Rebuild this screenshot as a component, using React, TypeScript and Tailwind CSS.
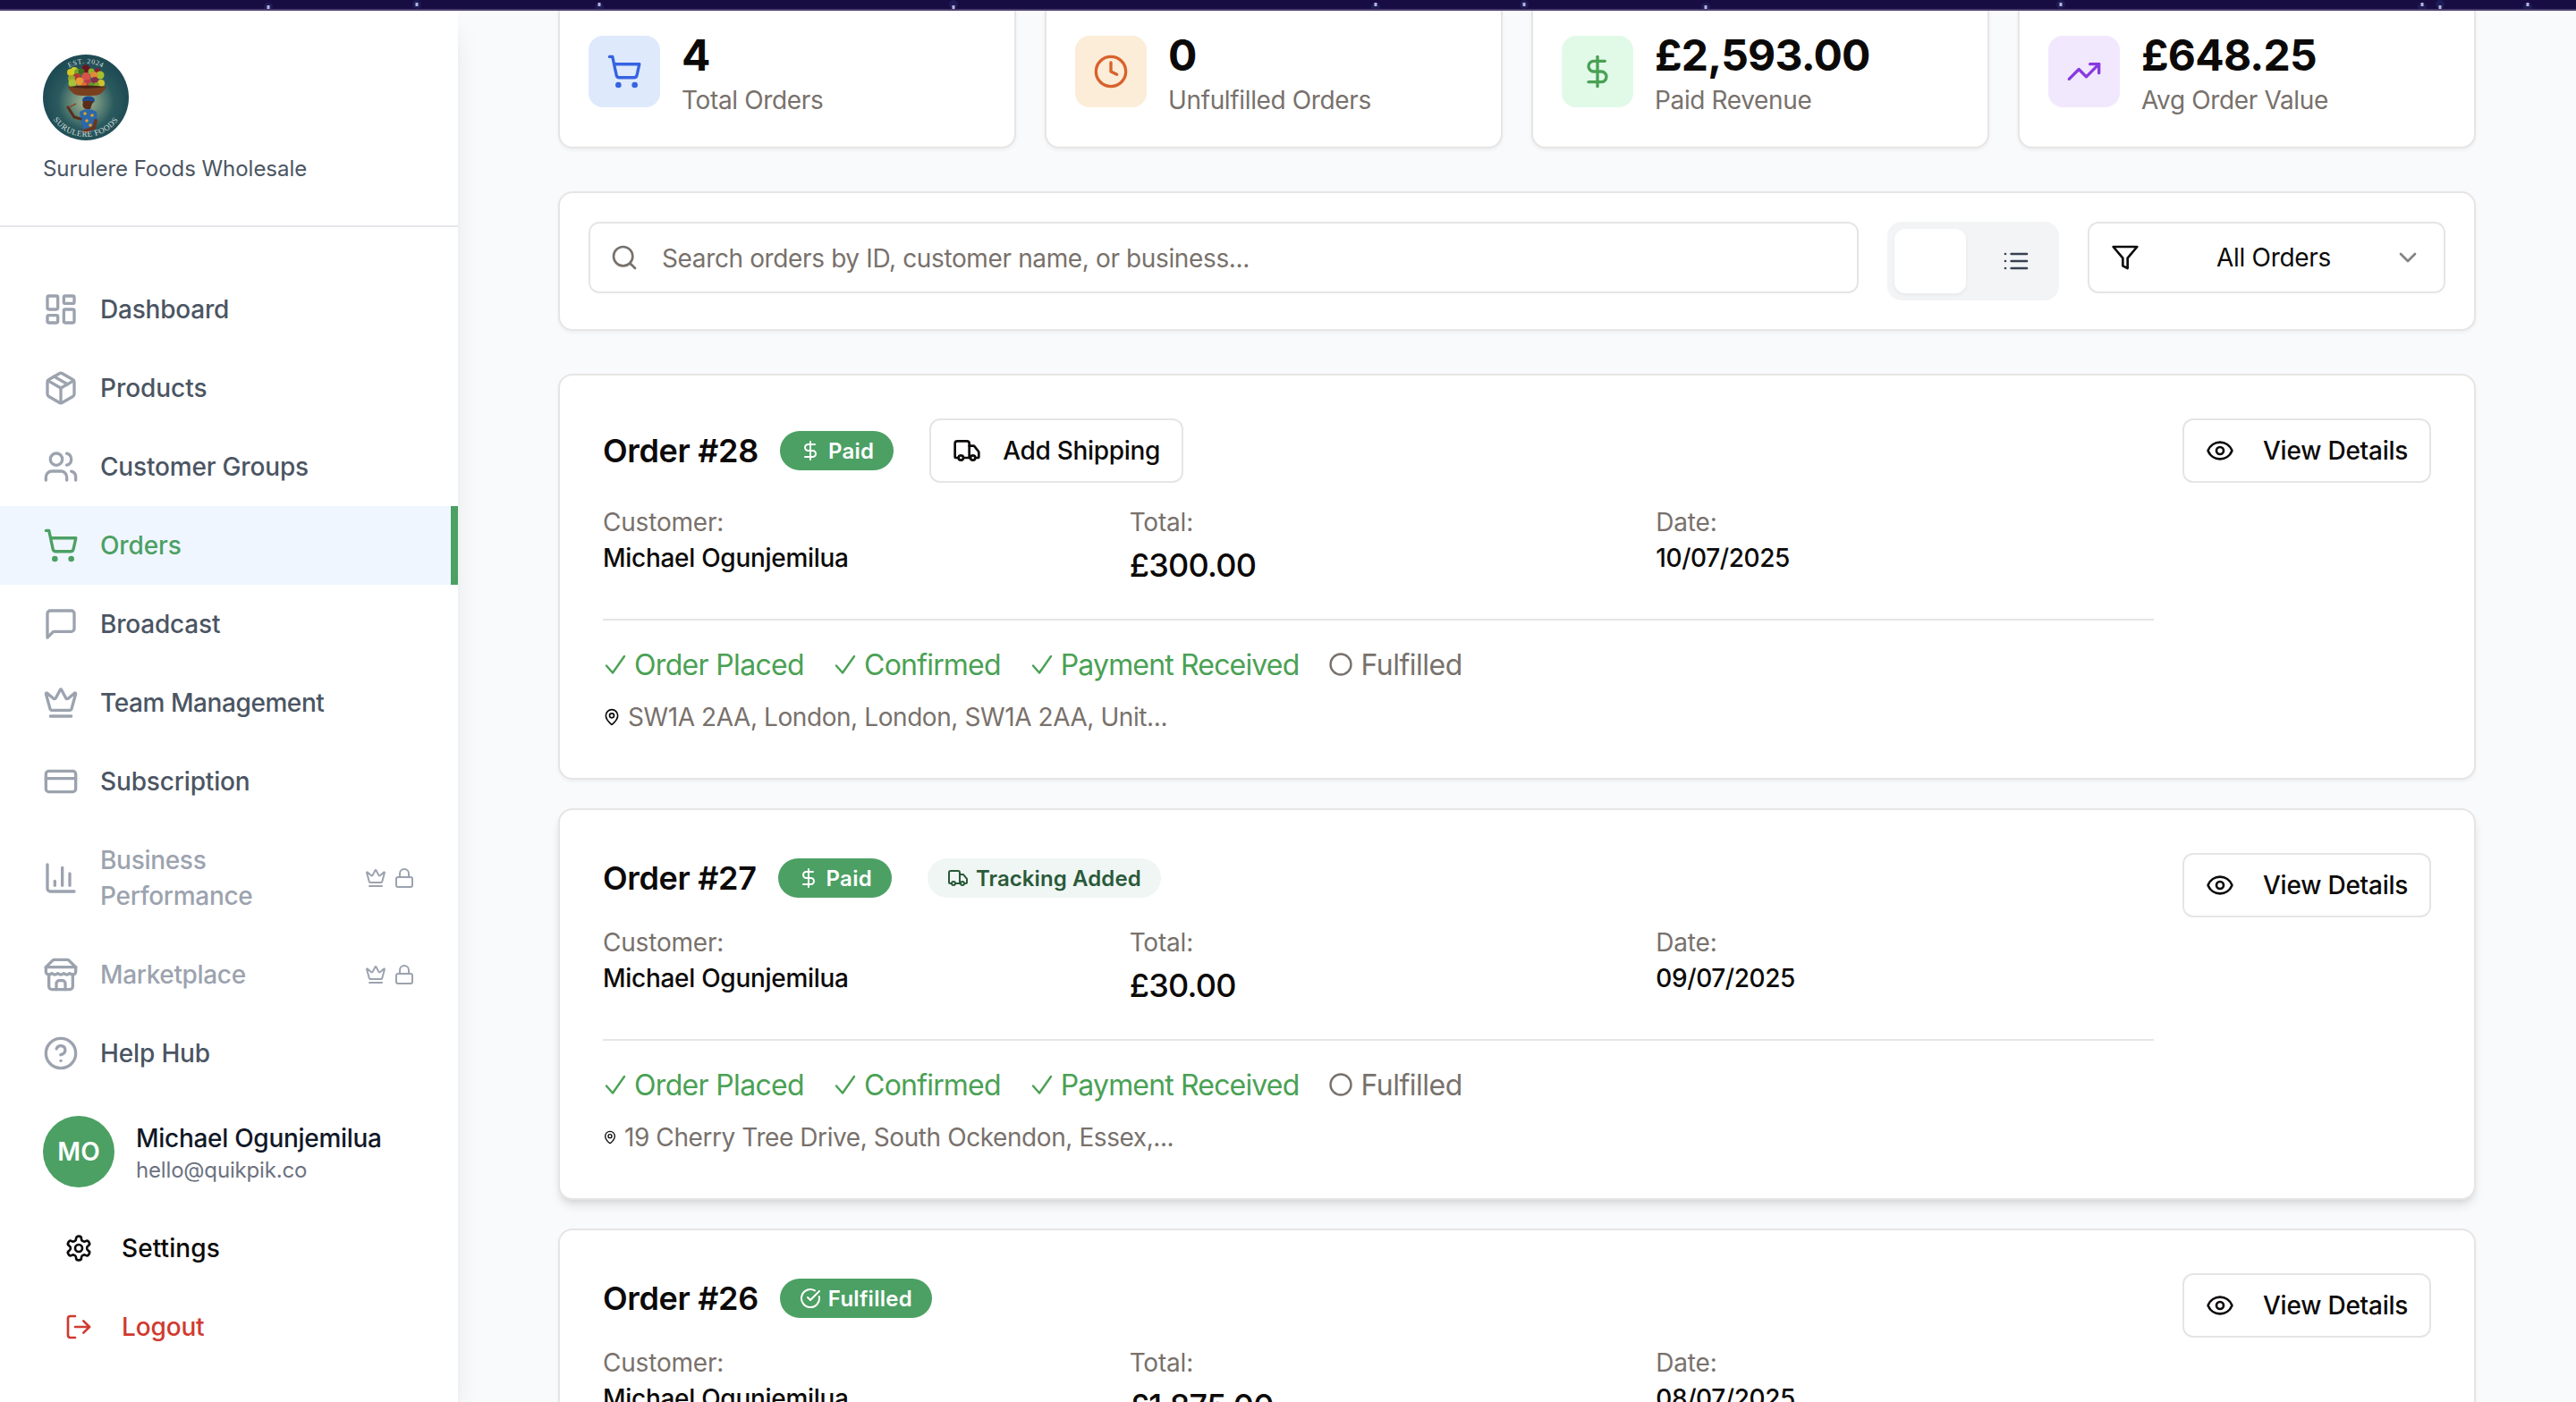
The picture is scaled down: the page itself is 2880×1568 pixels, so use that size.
import React from "react";
import {
  LayoutDashboard, Package, Users, ShoppingCart, Crown, CreditCard,
  CircleHelp, LogOut, Lock, Clock, DollarSign, TrendingUp, Search, ChevronDown,
  Truck, Eye, MapPin, CircleCheckBig,
} from "lucide-react";

type IconProps = { className?: string };

function strokeIcon(paths: string[]) {
  return function StrokeIcon({ className }: IconProps) {
    return (
      <svg viewBox="0 0 24 24" fill="none" stroke="currentColor" strokeWidth="2" strokeLinecap="round" strokeLinejoin="round" className={className}>
        {paths.map((d) => <path key={d} d={d} />)}
      </svg>
    );
  };
}

const BarsIcon = strokeIcon(["M3 3v16a2 2 0 0 0 2 2h16", "M18 17V9", "M13 17V5", "M8 17v-3"]);
const MessageIcon = strokeIcon(["M21 15a2 2 0 0 1-2 2H7l-4 4V5a2 2 0 0 1 2-2h14a2 2 0 0 1 2 2z"]);
const ListIcon = strokeIcon(["M3 12h.01", "M3 18h.01", "M3 6h.01", "M8 12h13", "M8 18h13", "M8 6h13"]);
const FilterIcon = strokeIcon(["M22 3H2l8 9.46V19l4 2v-8.54L22 3z"]);
const StoreIcon = strokeIcon([
  "m2 7 4.41-4.41A2 2 0 0 1 7.83 2h8.34a2 2 0 0 1 1.42.59L22 7",
  "M4 12v8a2 2 0 0 0 2 2h12a2 2 0 0 0 2-2v-8",
  "M15 22v-4a2 2 0 0 0-2-2h-2a2 2 0 0 0-2 2v4",
  "M2 7h20",
  "M22 7v3a2 2 0 0 1-2 2a2.7 2.7 0 0 1-1.59-.63.7.7 0 0 0-.82 0A2.7 2.7 0 0 1 16 12a2.7 2.7 0 0 1-1.59-.63.7.7 0 0 0-.82 0A2.7 2.7 0 0 1 12 12a2.7 2.7 0 0 1-1.59-.63.7.7 0 0 0-.82 0A2.7 2.7 0 0 1 8 12a2.7 2.7 0 0 1-1.59-.63.7.7 0 0 0-.82 0A2.7 2.7 0 0 1 4 12a2 2 0 0 1-2-2V7",
]);
const GearIcon = strokeIcon([
  "M12.22 2h-.44a2 2 0 0 0-2 2v.18a2 2 0 0 1-1 1.73l-.43.25a2 2 0 0 1-2 0l-.15-.08a2 2 0 0 0-2.73.73l-.22.38a2 2 0 0 0 .73 2.73l.15.1a2 2 0 0 1 1 1.72v.51a2 2 0 0 1-1 1.74l-.15.09a2 2 0 0 0-.73 2.73l.22.38a2 2 0 0 0 2.73.73l.15-.08a2 2 0 0 1 2 0l.43.25a2 2 0 0 1 1 1.73V20a2 2 0 0 0 2 2h.44a2 2 0 0 0 2-2v-.18a2 2 0 0 1 1-1.73l.43-.25a2 2 0 0 1 2 0l.15.08a2 2 0 0 0 2.73-.73l.22-.39a2 2 0 0 0-.73-2.73l-.15-.08a2 2 0 0 1-1-1.74v-.5a2 2 0 0 1 1-1.74l.15-.09a2 2 0 0 0 .73-2.73l-.22-.38a2 2 0 0 0-2.73-.73l-.15.08a2 2 0 0 1-2 0l-.43-.25a2 2 0 0 1-1-1.73V4a2 2 0 0 0-2-2z",
  "M15 12a3 3 0 1 1-6 0a3 3 0 1 1 6 0z",
]);

const nav = [
  { label: "Dashboard", icon: LayoutDashboard, tracking: "tracking-[-0.2px]" },
  { label: "Products", icon: Package, tracking: "tracking-[-0.05px]" },
  { label: "Customer Groups", icon: Users, tracking: "tracking-[-0.18px]" },
  { label: "Orders", icon: ShoppingCart, active: true, tracking: "tracking-[-0.1px]" },
  { label: "Broadcast", icon: MessageIcon, tracking: "tracking-[-0.2px]" },
  { label: "Team Management", icon: Crown, tracking: "tracking-[-0.42px]" },
  { label: "Subscription", icon: CreditCard, tracking: "tracking-[-0.15px]" },
  { label: "Business Performance", icon: BarsIcon, locked: true, tracking: "tracking-[-0.3px]" },
  { label: "Marketplace", icon: StoreIcon, locked: true, tracking: "tracking-[-0.35px]" },
  { label: "Help Hub", icon: CircleHelp, tracking: "tracking-[-0.15px]" },
];

const stars = [300, 466, 670, 1066, 1538, 1704, 1907, 2304, 2708, 2728, 2826];

function TopBar() {
  return (
    <div className="relative z-20 h-3 shrink-0 border-b-2 border-[#4b3e6e] bg-[#170d42]">
      <svg className="absolute inset-0 h-[10px] w-full" viewBox="0 0 2880 10">
        {stars.map((x, i) => (
          <g key={x}>
            <circle cx={x} cy={i % 2 ? 5 : 8} r="5" fill="#2a3a7a" opacity="0.35" />
            <rect x={x - 1.5} y={i % 3 ? 3 : 6} width="3" height="4" fill="#b9b4dc" />
          </g>
        ))}
      </svg>
    </div>
  );
}

function Logo() {
  const fruit: [number, number, number, string][] = [
    [31, 20, 4, "#d9c21c"], [35, 18, 4, "#c8d02a"], [39, 20, 4, "#7aa32a"], [48, 16, 4.5, "#6b1420"],
    [43, 19, 3.5, "#3d6b22"], [54, 19, 3.5, "#8fb32c"], [61, 18, 3, "#8a1c2c"], [64, 23, 4.5, "#a8bf2d"],
    [57, 23, 4, "#e08a3a"], [48, 25, 5, "#d9524a"], [38, 25, 4, "#b23a32"], [32, 27, 4, "#9aa82c"],
    [33, 32, 4.5, "#a9c23a"], [41, 30, 4.5, "#e89a38"], [50, 32, 4, "#c23a48"], [58, 29, 4, "#8a2d4a"],
    [65, 32, 4, "#cfc42e"], [54, 34, 3, "#5f9a30"], [46, 34, 3, "#e0702c"], [60, 34, 3, "#7fa82c"],
  ];
  return (
    <svg className="size-24" viewBox="0 0 96 96">
      <defs>
        <radialGradient id="halo" cx="50%" cy="55%" r="50%">
          <stop offset="0" stopColor="#a9b48a" />
          <stop offset="0.3" stopColor="#6d8f7d" />
          <stop offset="0.65" stopColor="#2a5a5e" />
          <stop offset="1" stopColor="#1f4b54" />
        </radialGradient>
        <path id="arcTop" d="M10 48 A38 38 0 0 1 86 48" />
        <path id="arcBottom" d="M4 48 A44 44 0 0 0 92 48" />
      </defs>
      <circle cx="48" cy="48" r="48" fill="url(#halo)" />
      {fruit.map(([x, y, r, c], i) => <circle key={i} cx={x} cy={y} r={r} fill={c} />)}
      <path d="M28 36 Q49 40 71 36 Q67 46 55 46 H44 Q32 46 28 36Z" fill="#7a3f1e" />
      <path d="M28 36 Q49 33 71 36 Q49 40 28 36Z" fill="#4c2412" />
      <ellipse cx="51" cy="51" rx="7" ry="4.500" fill="#1f4a8c" />
      <path d="M45 52 Q43 60 48 61 L53 61 L56 52Z" fill="#5a2c1a" />
      <path d="M41 64 Q50 58 60 64 L61 74 L57 77 V86 H46 L43 78Z" fill="#2b68a8" />
      <path d="M42 72 L35 70 L28 59" fill="none" stroke="#5a2c1a" strokeWidth="3" strokeLinecap="round" />
      <path d="M29 59 L37 55" stroke="#8a4a26" strokeWidth="1.500" />
      <path d="M59 74 L57 82 L46 86" fill="none" stroke="#6a3520" strokeWidth="4" strokeLinecap="round" />
      <circle cx="47" cy="66" r="1.800" fill="#e0a030" /><circle cx="55" cy="68" r="1.800" fill="#e0a030" />
      <circle cx="49" cy="74" r="1.800" fill="#e0a030" /><circle cx="53" cy="79" r="1.800" fill="#e0a030" />
      <text fill="#d5dfdc" fontSize="8" letterSpacing="0.6" fontFamily="Liberation Serif, serif" textAnchor="middle">
        <textPath href="#arcTop" startOffset="50%">EST. 2024</textPath>
      </text>
      <text fill="#d5dfdc" fontSize="9" letterSpacing="0.5" fontFamily="Liberation Serif, serif" textAnchor="middle">
        <textPath href="#arcBottom" startOffset="50%">SURULERE FOODS</textPath>
      </text>
    </svg>
  );
}

function Sidebar() {
  return (
    <aside className="z-10 flex w-[512px] shrink-0 flex-col bg-white shadow-[0_20px_30px_-6px_rgba(0,0,0,0.1),0_8px_12px_-8px_rgba(0,0,0,0.1)]">
      <div className="h-[242px] border-b-2 border-[#e5e7eb] px-12 pt-[49px]">
        <Logo />
        <p className="mt-4 text-2xl leading-8 tracking-[-0.04px] text-[#4b5563]">Surulere Foods Wholesale</p>
      </div>
      <nav className="mt-12">
        {nav.map(({ label, icon: Icon, active, locked, tracking }) => (
          <a
            key={label}
            className={
              active
                ? "flex items-center border-r-8 border-[#4ca064] bg-[#eff6ff] py-6 pl-12 pr-10 text-[#4ca064]"
                : locked
                ? "flex items-center px-12 py-6 text-[#9ca3af]"
                : "flex items-center px-12 py-6 text-[#4b5563]"
            }
          >
            <Icon className={active ? "mr-6 size-10 shrink-0" : "mr-6 size-10 shrink-0 text-[#9ca3af]"} />
            <span className={"text-[28px] font-medium leading-10 " + tracking + (locked ? " w-[240px]" : " whitespace-nowrap")}>{label}</span>
            {locked && (
              <span className="ml-auto flex items-center gap-2">
                <Crown className="size-6" />
                <Lock className="size-6" />
              </span>
            )}
          </a>
        ))}
      </nav>
      <div className="mt-[26px] flex items-center px-12">
        <div className="flex size-20 items-center justify-center rounded-full bg-[#4ca064] text-[28px] font-semibold text-white">MO</div>
        <div className="ml-6 pt-px">
          <p className="text-[28px] font-medium leading-10 tracking-[-0.29px] text-[#111827]">Michael Ogunjemilua</p>
          <p className="text-2xl leading-8 tracking-[-0.17px] text-[#6b7280]">hello@quikpik.co</p>
        </div>
      </div>
      <div className="mt-6 flex flex-col px-[72px] text-[28px] font-medium">
        <a className="flex h-[88px] items-center gap-8 tracking-[0.1px] text-[#0c0a09]"><GearIcon className="size-8" />Settings</a>
        <a className="flex h-[88px] items-center gap-8 tracking-[-0.15px] text-[#d03a30]"><LogOut className="size-8" />Logout</a>
      </div>
    </aside>
  );
}

const cardBase = "rounded-2xl border-2 border-[#e7e5e4] bg-white";
const cardShadow = " shadow-[0_2px_4px_rgba(0,0,0,0.05)]";

const stats = [
  { value: "4", label: "Total Orders", icon: ShoppingCart, tint: "bg-[#dee9fc] text-[#3663e2]" },
  { value: "0", label: "Unfulfilled Orders", icon: Clock, tint: "bg-[#fcedd8] text-[#d9622b]" },
  { value: "£2,593.00", label: "Paid Revenue", icon: DollarSign, tint: "bg-[#e1fae8] text-[#4aa154]" },
  { value: "£648.25", label: "Avg Order Value", icon: TrendingUp, tint: "bg-[#f1e8fd] text-[#873ae0]" },
];

function Stats() {
  return (
    <div className="-mt-[18px] grid grid-cols-4 gap-8">
      {stats.map(({ value, label, icon: Icon, tint }) => (
        <div key={label} className={cardBase + cardShadow + " flex items-center gap-6 p-8"}>
          <div className={"flex size-20 items-center justify-center rounded-2xl " + tint}>
            <Icon className="size-10" />
          </div>
          <div>
            <p className="h-16 pt-0.5 text-5xl font-bold leading-[64px] tracking-[-0.8px]">{value}</p>
            <p className="text-[28px] leading-10 tracking-[-0.36px] text-[#78716c]">{label}</p>
          </div>
        </div>
      ))}
    </div>
  );
}

function Toolbar() {
  return (
    <div className={cardBase + cardShadow + " mt-12 flex items-start gap-8 p-8"}>
      <div className="flex h-20 grow items-center gap-[26px] rounded-xl border-2 border-[#e5e5e5] px-[22px] text-[28px] tracking-[-0.37px] text-[#78716c]">
        <Search className="size-8" />
        <span className="pt-0.5">Search orders by ID, customer name, or business...</span>
      </div>
      <div className="flex h-[88px] w-48 justify-between rounded-2xl bg-[#f3f4f6] p-2">
        <div className="h-[72px] w-20 rounded-xl bg-white shadow-[0_2px_4px_rgba(0,0,0,0.05)]" />
        <div className="flex h-[72px] w-20 items-center justify-center text-[#374151]"><ListIcon className="size-8" /></div>
      </div>
      <div className="flex h-20 w-[400px] items-center justify-between rounded-xl border-2 border-[#e5e5e5] px-6 text-[28px] tracking-[-0.28px]">
        <FilterIcon className="mr-4 size-8" />
        <span>All Orders</span>
        <ChevronDown className="size-8 opacity-50" />
      </div>
    </div>
  );
}

function Step({ label, done, tracking }: { label: string; done?: boolean; tracking: string }) {
  return (
    <div className={done ? "flex items-center text-[#4aa154]" : "flex items-center text-[#78716c]"}>
      {done ? (
        <svg viewBox="0 0 28 28" className="mr-[7px] size-7" fill="none" stroke="currentColor" strokeWidth="2.400" strokeLinecap="round" strokeLinejoin="round">
          <path d="M4 16.500 L11 24.500 L24 6" />
        </svg>
      ) : (
        <svg viewBox="0 0 30 30" className="mr-[7px] mt-px size-[30px]" fill="none" stroke="currentColor" strokeWidth="2.400">
          <circle cx="15" cy="15" r="11.500" />
        </svg>
      )}
      <span className={"-mb-[3px] " + tracking}>{label}</span>
    </div>
  );
}

const badge = "flex h-11 items-center gap-2 rounded-full px-[22px] text-2xl font-semibold";
const outlineButton = "flex h-[72px] shrink-0 items-center rounded-xl border-2 border-[#e5e5e5] px-6 text-[28px] font-medium";

type Order = {
  id: number;
  status: "Paid" | "Fulfilled";
  shipping?: "add" | "tracking";
  total: string;
  date: string;
  address: string;
  hovered?: boolean;
  pin: string;
};

const orders: Order[] = [
  { id: 28, status: "Paid", shipping: "add", total: "£300.00", date: "10/07/2025", address: "SW1A 2AA, London, London, SW1A 2AA, Unit...", pin: "h-6 w-5" },
  { id: 27, status: "Paid", shipping: "tracking", total: "£30.00", date: "09/07/2025", address: "19 Cherry Tree Drive, South Ockendon, Essex,...", hovered: true, pin: "h-6 w-4" },
  { id: 26, status: "Fulfilled", total: "£1,875.00", date: "08/07/2025", address: "19 Cherry Tree Drive, South Ockendon, Essex,...", pin: "h-6 w-4" },
];

function OrderCard({ order }: { order: Order }) {
  return (
    <div className={cardBase + (order.hovered ? " shadow-[0_8px_12px_-2px_rgba(0,0,0,0.1),0_4px_8px_-4px_rgba(0,0,0,0.1)]" : cardShadow) + " flex items-start gap-8 p-12"}>
      <div className="grow">
        <div className="flex min-h-14 items-center">
          <h3 className="text-4xl font-semibold leading-[56px] tracking-[-0.34px]">Order #{order.id}</h3>
          <span className={badge + " ml-6 bg-[#4ca064] tracking-[0.25px] text-white"}>
            {order.status === "Paid" ? <DollarSign className="size-6" /> : <CircleCheckBig className="size-6" />}
            <span className="pt-px">{order.status}</span>
          </span>
          {order.shipping === "add" && (
            <span className={outlineButton + " ml-10 gap-6 tracking-[-0.3px]"}><Truck className="size-8" />Add Shipping</span>
          )}
          {order.shipping === "tracking" && (
            <span className={badge + " ml-10 bg-[#f0f6f4] tracking-[0.1px] text-[#2a5a3a]"}><Truck className="size-6" /><span className="pt-px">Tracking Added</span></span>
          )}
        </div>
        <div className="mt-6 grid grid-cols-3 gap-8 text-[28px] leading-10">
          <div>
            <p className="tracking-[-0.2px] text-[#78716c]">Customer:</p>
            <p className="font-medium tracking-[-0.29px]">Michael Ogunjemilua</p>
          </div>
          <div>
            <p className="tracking-[-0.2px] text-[#78716c]">Total:</p>
            <p className="text-4xl font-medium leading-[56px] tracking-[-0.75px]">{order.total}</p>
          </div>
          <div>
            <p className="tracking-[-0.2px] text-[#78716c]">Date:</p>
            <p className="font-medium tracking-[-0.42px]">{order.date}</p>
          </div>
        </div>
        <div className="mt-8 border-t-2 border-[#e5e5e5] pt-6">
          <div className="flex h-12 gap-8 text-[32px] leading-[48px]">
            <Step label="Order Placed" tracking="tracking-[-0.66px]" done />
            <Step label="Confirmed" tracking="tracking-[-0.8px]" done />
            <Step label="Payment Received" tracking="tracking-[-0.84px]" done />
            <Step label="Fulfilled" tracking="tracking-[-0.5px]" done={order.status === "Fulfilled"} />
          </div>
          <div className="mt-4 flex items-center gap-2 text-[28px] leading-10">
            <MapPin className={order.pin} />
            <span className="tracking-[-0.42px] text-[#78716c]">{order.address}</span>
          </div>
        </div>
      </div>
      <span className={outlineButton + " w-[278px] gap-8 whitespace-nowrap tracking-[-0.23px]"}><Eye className="size-8 shrink-0" />View Details</span>
    </div>
  );
}

export default function App() {
  return (
    <div className="flex h-[1568px] w-[2880px] flex-col overflow-hidden bg-[#f9fafc] font-['Inter',sans-serif] text-[#0c0a09]">
      <TopBar />
      <div className="flex min-h-0 grow">
        <Sidebar />
        <main className="h-full grow pl-28 pr-28">
          <Stats />
          <Toolbar />
          <div className="mt-12 flex flex-col gap-8">
            {orders.map((o) => <OrderCard key={o.id} order={o} />)}
          </div>
        </main>
      </div>
    </div>
  );
}
